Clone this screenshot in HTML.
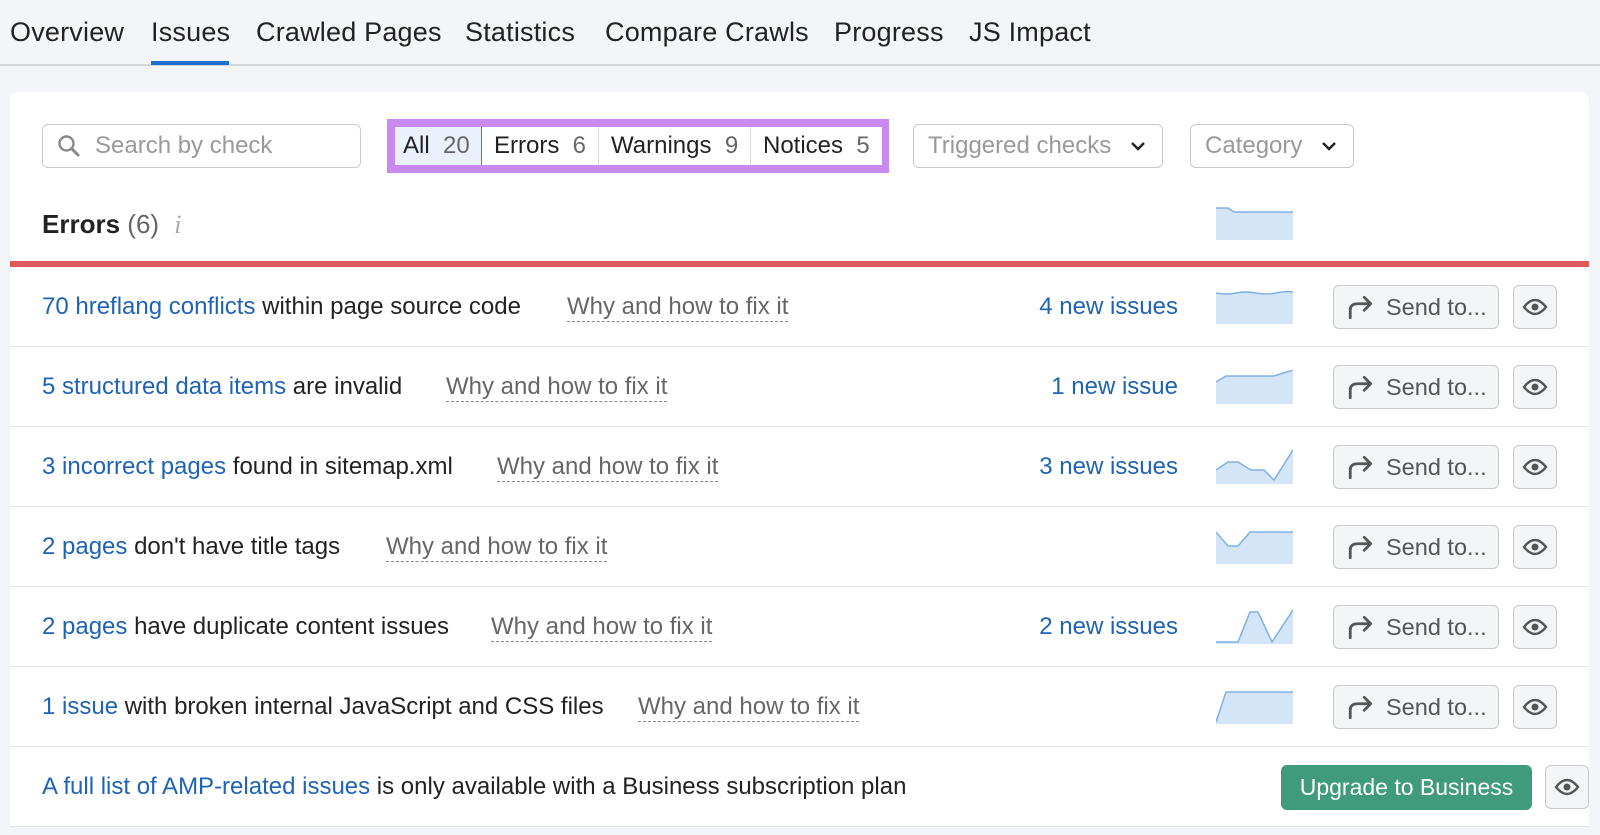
<!DOCTYPE html>
<html><head><meta charset="utf-8"><style>
*{box-sizing:border-box;margin:0;padding:0}
body{width:1600px;height:835px;background:#f4f5f9;font-family:"Liberation Sans",sans-serif;position:relative;overflow:hidden;color:#222}
.a{position:absolute}
.tab{position:absolute;top:17px;font-size:27px;color:#222;letter-spacing:0.2px}
.card{position:absolute;left:10px;top:92px;width:1579px;height:735px;background:#fff;border-radius:8px 8px 0 0}
.box{position:absolute;border:1.5px solid #c8c9ce;border-radius:6px;background:#fff;font-size:24px;color:#999;display:flex;align-items:center}
.row{position:absolute;left:10px;width:1579px;height:80px;border-bottom:1.5px solid #e6e7ea}
.t{position:absolute;left:32px;font-size:24px;line-height:80px;white-space:nowrap;color:#222}
.t b{font-weight:normal;color:#1f63b4}
.why{position:absolute;font-size:24px;color:#666;line-height:28px;border-bottom:1.5px dashed #888;white-space:nowrap}
.new{position:absolute;right:422px;font-size:24px;color:#1f63b4;line-height:80px}
.send{position:absolute;left:1333px;width:166px;height:44px;border:1.5px solid #c8c9ce;border-radius:6px;background:#f4f5f7;font-size:23.5px;color:#555;display:flex;align-items:center;padding-left:13px;gap:11px}
.eye{position:absolute;left:1513px;width:44px;height:44px;border:1.5px solid #c8c9ce;border-radius:6px;background:#f4f5f7;display:flex;align-items:center;justify-content:center}
</style></head><body>
<div class="tab" style="left:10px">Overview</div>
<div class="tab" style="left:151px">Issues</div>
<div class="tab" style="left:256px">Crawled Pages</div>
<div class="tab" style="left:465px">Statistics</div>
<div class="tab" style="left:605px">Compare Crawls</div>
<div class="tab" style="left:834px">Progress</div>
<div class="tab" style="left:969px">JS Impact</div>
<div class="a" style="left:0;top:64px;width:1600px;height:1.5px;background:#d5d6db"></div>
<div class="a" style="left:151px;top:61px;width:78px;height:4px;background:#1f6fd0"></div>
<div class="card"></div>
<div class="box" style="left:42px;top:124px;width:319px;height:44px;padding-left:14px;gap:14px">
<svg width="24" height="24" viewBox="0 0 24 24"><circle cx="9.5" cy="9.5" r="7" fill="none" stroke="#888" stroke-width="2.4"/><path d="M14.5 14.5L21 21" stroke="#888" stroke-width="3" stroke-linecap="round"/></svg>Search by check</div>
<div class="a" style="left:387px;top:119px;width:502px;height:54px;background:#c88af0;"></div>
<div class="a" style="left:395px;top:127px;width:487px;height:38px;background:#fff;font-size:24px;color:#222;display:flex">
<div style="width:87px;background:#e9f1fc;border-right:1.5px solid #4a7fc0;padding:5px 0 0 8px">All&nbsp; <span style="color:#666">20</span></div>
<div style="width:117px;border-right:1.5px solid #ddd;padding:5px 0 0 12px">Errors&nbsp; <span style="color:#666">6</span></div>
<div style="width:152px;border-right:1.5px solid #ddd;padding:5px 0 0 12px">Warnings&nbsp; <span style="color:#666">9</span></div>
<div style="padding:5px 0 0 12px">Notices&nbsp; <span style="color:#666">5</span></div>
</div>
<div class="box" style="left:913px;top:124px;width:250px;height:44px;padding-left:14px">Triggered checks<svg style="position:absolute;right:16px" width="16" height="10" viewBox="0 0 16 10"><path d="M2 2l6 6 6-6" fill="none" stroke="#222" stroke-width="2.5"/></svg></div>
<div class="box" style="left:1190px;top:124px;width:164px;height:44px;padding-left:14px">Category<svg style="position:absolute;right:16px" width="16" height="10" viewBox="0 0 16 10"><path d="M2 2l6 6 6-6" fill="none" stroke="#222" stroke-width="2.5"/></svg></div>
<div class="a" style="left:42px;top:209px;font-size:26px"><b>Errors</b> <span style="color:#666">(6)</span> <i style="color:#aaa;font-family:'Liberation Serif',serif;margin-left:8px">i</i></div>
<svg class="a" style="left:1216px;top:206px" width="77" height="34"><path d="M0 2L12 2L18 6L77 6L77 34L0 34Z" fill="#d3e5f7"/><path d="M0 2L12 2L18 6L77 6" fill="none" stroke="#7fb0e4" stroke-width="1.5"/></svg>
<div class="a" style="left:10px;top:261px;width:1579px;height:6px;background:#e0595b"></div>

<div class="row" style="top:267px"><div class="t"><b>70 hreflang conflicts</b> within page source code</div></div>
<div class="row" style="top:347px"><div class="t"><b>5 structured data items</b> are invalid</div></div>
<div class="row" style="top:427px"><div class="t"><b>3 incorrect pages</b> found in sitemap.xml</div></div>
<div class="row" style="top:507px"><div class="t"><b>2 pages</b> don't have title tags</div></div>
<div class="row" style="top:587px"><div class="t"><b>2 pages</b> have duplicate content issues</div></div>
<div class="row" style="top:667px"><div class="t"><b>1 issue</b> with broken internal JavaScript and CSS files</div></div>
<div class="row" style="top:747px;height:80px"><div class="t"><b>A full list of AMP-related issues</b> is only available with a Business subscription plan</div></div>

<div class="why" style="left:567px;top:293px">Why and how to fix it</div>
<div class="why" style="left:446px;top:373px">Why and how to fix it</div>
<div class="why" style="left:497px;top:453px">Why and how to fix it</div>
<div class="why" style="left:386px;top:533px">Why and how to fix it</div>
<div class="why" style="left:491px;top:613px">Why and how to fix it</div>
<div class="why" style="left:638px;top:693px">Why and how to fix it</div>

<div class="new" style="top:267px">4 new issues</div>
<div class="new" style="top:347px">1 new issue</div>
<div class="new" style="top:427px">3 new issues</div>
<div class="new" style="top:587px">2 new issues</div>

<svg class="a" style="left:1216px;top:290px" width="77" height="34"><path d="M0 3Q10 5 20 3T40 3T60 3T77 2L77 34L0 34Z" fill="#d3e5f7"/><path d="M0 3Q10 5 20 3T40 3T60 3T77 2" fill="none" stroke="#7fb0e4" stroke-width="1.5"/></svg>
<svg class="a" style="left:1216px;top:370px" width="77" height="34"><path d="M0 12L10 6L58 6L77 0L77 34L0 34Z" fill="#d3e5f7"/><path d="M0 12L10 6L58 6L77 0" fill="none" stroke="#7fb0e4" stroke-width="1.5"/></svg>
<svg class="a" style="left:1216px;top:450px" width="77" height="34"><path d="M0 20L12 12L22 12L35 20L48 20L58 30L77 0L77 34L0 34Z" fill="#d3e5f7"/><path d="M0 20L12 12L22 12L35 20L48 20L58 30L77 0" fill="none" stroke="#7fb0e4" stroke-width="1.5"/></svg>
<svg class="a" style="left:1216px;top:530px" width="77" height="34"><path d="M0 2L12 16L22 16L34 2L77 2L77 34L0 34Z" fill="#d3e5f7"/><path d="M0 2L12 16L22 16L34 2L77 2" fill="none" stroke="#7fb0e4" stroke-width="1.5"/></svg>
<svg class="a" style="left:1216px;top:610px" width="77" height="34"><path d="M0 32L22 32L34 2L42 2L56 32L77 0L77 34L0 34Z" fill="#d3e5f7"/><path d="M0 32L22 32L34 2L42 2L56 32L77 0" fill="none" stroke="#7fb0e4" stroke-width="1.5"/></svg>
<svg class="a" style="left:1216px;top:690px" width="77" height="34"><path d="M0 32L10 2L77 2L77 34L0 34Z" fill="#d3e5f7"/><path d="M0 32L10 2L77 2" fill="none" stroke="#7fb0e4" stroke-width="1.5"/></svg>

<div class="send a" style="top:285px"><svg width="28" height="26" viewBox="0 0 26 24"><path d="M3 22V15Q3 9 10 9H22M16 3L22 9L16 15" fill="none" stroke="#555" stroke-width="2.6" stroke-linecap="round" stroke-linejoin="round"/></svg>Send to...</div>
<div class="send a" style="top:365px"><svg width="28" height="26" viewBox="0 0 26 24"><path d="M3 22V15Q3 9 10 9H22M16 3L22 9L16 15" fill="none" stroke="#555" stroke-width="2.6" stroke-linecap="round" stroke-linejoin="round"/></svg>Send to...</div>
<div class="send a" style="top:445px"><svg width="28" height="26" viewBox="0 0 26 24"><path d="M3 22V15Q3 9 10 9H22M16 3L22 9L16 15" fill="none" stroke="#555" stroke-width="2.6" stroke-linecap="round" stroke-linejoin="round"/></svg>Send to...</div>
<div class="send a" style="top:525px"><svg width="28" height="26" viewBox="0 0 26 24"><path d="M3 22V15Q3 9 10 9H22M16 3L22 9L16 15" fill="none" stroke="#555" stroke-width="2.6" stroke-linecap="round" stroke-linejoin="round"/></svg>Send to...</div>
<div class="send a" style="top:605px"><svg width="28" height="26" viewBox="0 0 26 24"><path d="M3 22V15Q3 9 10 9H22M16 3L22 9L16 15" fill="none" stroke="#555" stroke-width="2.6" stroke-linecap="round" stroke-linejoin="round"/></svg>Send to...</div>
<div class="send a" style="top:685px"><svg width="28" height="26" viewBox="0 0 26 24"><path d="M3 22V15Q3 9 10 9H22M16 3L22 9L16 15" fill="none" stroke="#555" stroke-width="2.6" stroke-linecap="round" stroke-linejoin="round"/></svg>Send to...</div>

<div class="eye a" style="top:285px"><svg width="26" height="20" viewBox="0 0 26 20"><path d="M2 10Q13 -4 24 10Q13 24 2 10Z" fill="none" stroke="#555" stroke-width="2.4"/><circle cx="13" cy="10" r="3.5" fill="#555"/></svg></div>
<div class="eye a" style="top:365px"><svg width="26" height="20" viewBox="0 0 26 20"><path d="M2 10Q13 -4 24 10Q13 24 2 10Z" fill="none" stroke="#555" stroke-width="2.4"/><circle cx="13" cy="10" r="3.5" fill="#555"/></svg></div>
<div class="eye a" style="top:445px"><svg width="26" height="20" viewBox="0 0 26 20"><path d="M2 10Q13 -4 24 10Q13 24 2 10Z" fill="none" stroke="#555" stroke-width="2.4"/><circle cx="13" cy="10" r="3.5" fill="#555"/></svg></div>
<div class="eye a" style="top:525px"><svg width="26" height="20" viewBox="0 0 26 20"><path d="M2 10Q13 -4 24 10Q13 24 2 10Z" fill="none" stroke="#555" stroke-width="2.4"/><circle cx="13" cy="10" r="3.5" fill="#555"/></svg></div>
<div class="eye a" style="top:605px"><svg width="26" height="20" viewBox="0 0 26 20"><path d="M2 10Q13 -4 24 10Q13 24 2 10Z" fill="none" stroke="#555" stroke-width="2.4"/><circle cx="13" cy="10" r="3.5" fill="#555"/></svg></div>
<div class="eye a" style="top:685px"><svg width="26" height="20" viewBox="0 0 26 20"><path d="M2 10Q13 -4 24 10Q13 24 2 10Z" fill="none" stroke="#555" stroke-width="2.4"/><circle cx="13" cy="10" r="3.5" fill="#555"/></svg></div>

<div class="a" style="left:1281px;top:765px;width:251px;height:45px;background:#3f9b7b;border-radius:6px;color:#fff;font-size:23px;display:flex;align-items:center;justify-content:center">Upgrade to Business</div>
<div class="eye a" style="left:1545px;top:765px"><svg width="26" height="20" viewBox="0 0 26 20"><path d="M2 10Q13 -4 24 10Q13 24 2 10Z" fill="none" stroke="#555" stroke-width="2.4"/><circle cx="13" cy="10" r="3.5" fill="#555"/></svg></div>
</body></html>
